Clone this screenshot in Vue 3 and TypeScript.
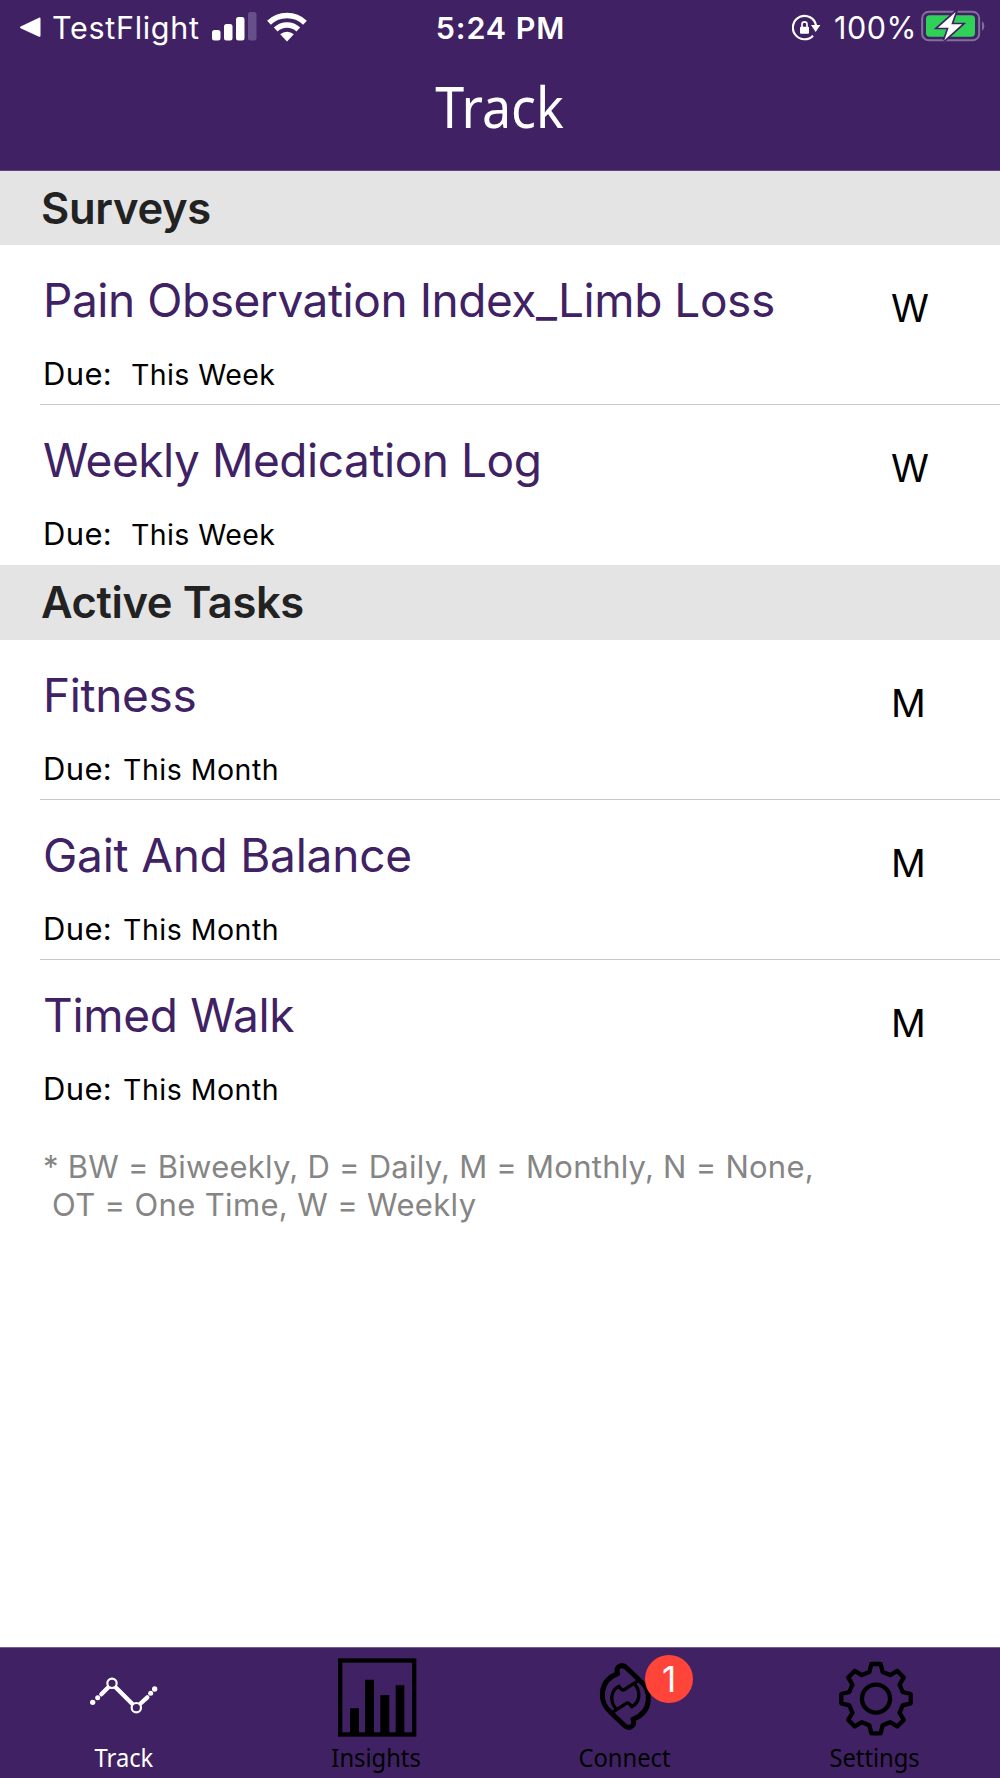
<script setup lang="ts">
interface Task {
  title: string
  due: string
  code: string
  wide?: boolean
  spacing: number
}
interface Section {
  name: string
  spacing: number
  tasks: Task[]
}

const sections: Section[] = [
  {
    name: 'Surveys',
    spacing: -0.3,
    tasks: [
      { title: 'Pain Observation Index_Limb Loss', due: 'This Week', code: 'W', wide: true, spacing: -0.45 },
      { title: 'Weekly Medication Log', due: 'This Week', code: 'W', wide: true, spacing: -0.45 },
    ],
  },
  {
    name: 'Active Tasks',
    spacing: -0.4,
    tasks: [
      { title: 'Fitness', due: 'This Month', code: 'M', spacing: -0.35 },
      { title: 'Gait And Balance', due: 'This Month', code: 'M', spacing: -0.23 },
      { title: 'Timed Walk', due: 'This Month', code: 'M', spacing: -0.3 },
    ],
  },
]

// One arrow of the sync icon; the second is the same shape turned half way round
const arrowOuter = 'M154 218C116 190 114 124 173 101Q167 84 180 78Q190 74 200 84L238 120'
const arrowInner = 'M236 121 193 149Q186 154 177 139C151 152 150 184 166 204'

// One tooth of the gear, repeated every 45 degrees around its centre
const tooth: [number, number][] = [[-20, -80], [-14, -104], [14, -104], [20, -80]]
const gearPoints = Array.from({ length: 8 }, (_, i) => {
  const a = (i * Math.PI) / 4
  return tooth
    .map(([x, y]) => {
      const px = 228 + x * Math.cos(a) - y * Math.sin(a)
      const py = 176 + x * Math.sin(a) + y * Math.cos(a)
      return `${px.toFixed(1)},${py.toFixed(1)}`
    })
    .join(' ')
}).join(' ')
</script>

<template>
  <div class="screen">
    <header class="top">
      <div class="status">
        <div class="left">
          <svg class="back" viewBox="0 0 21 21"><path d="M0.6 9.4 19 .7Q20.5.2 20.5 1.7V18.8Q20.5 20.3 19 19.7L.6 11.3Q-.6 10.3.6 9.4Z" fill="#fff" /></svg>
          <span class="carrier">TestFlight</span>
          <svg class="signal" viewBox="0 0 45 30">
            <rect x="0" y="18" width="8.5" height="10.5" rx="2.5" fill="#fff" />
            <rect x="12" y="12" width="8.5" height="16.5" rx="2.5" fill="#fff" />
            <rect x="24" y="5" width="8.5" height="23.5" rx="2.5" fill="#fff" />
            <rect x="36" y="0" width="8.5" height="28.5" rx="2.5" fill="#67508a" />
          </svg>
          <svg class="wifi" viewBox="0 0 40 30">
            <g fill="none" stroke="#fff" stroke-width="5.4">
              <path d="M2 10.8A26 26 0 0 1 38 10.8" />
              <path d="M8.7 17.5A16.5 16.5 0 0 1 31.3 17.5" />
            </g>
            <path d="M20 29.4 13.2 22.3A10 10 0 0 1 26.8 22.3Z" fill="#fff" />
          </svg>
        </div>
        <div class="time">5:24 PM</div>
        <div class="right">
          <svg class="lock" viewBox="0 0 84 84">
            <path d="M63 65A35 35 0 1 1 72 34" fill="none" stroke="#fff" stroke-width="6.5" />
            <path d="M57 33H85L71 54Z" fill="#fff" />
            <rect x="24" y="38" width="27" height="21" rx="3" fill="#fff" />
            <path d="M30 40V31a7.500 7.500 0 0 1 15 0V40" fill="none" stroke="#fff" stroke-width="5" />
          </svg>
          <span class="percent">100%</span>
          <svg class="battery" viewBox="0 0 192 96">
            <rect x="3.500" y="5" width="171" height="86" rx="20" fill="none" stroke="#83709d" stroke-width="6" />
            <path d="M183 34Q190 38 190 48T183 62Z" fill="#83709d" />
            <rect x="15" y="16" width="147" height="64" rx="11" fill="#30d158" />
            <path d="M104 6 51 53H83L70 91 123 43H91Z" fill="#fff" stroke="#402264" stroke-width="10" paint-order="stroke" />
          </svg>
        </div>
      </div>
      <h1 class="heading"><span>Track</span></h1>
    </header>

    <main class="content">
      <section v-for="s in sections" :key="s.name">
        <h2 class="section-head" :class="{ later: s.name !== 'Surveys' }" :style="{ letterSpacing: s.spacing + 'px' }">{{ s.name }}</h2>
        <article v-for="t in s.tasks" :key="t.title" class="row">
          <div class="info">
            <div class="title" :style="{ letterSpacing: t.spacing + 'px' }">{{ t.title }}</div>
            <div class="due"><span class="due-label">Due:</span><span class="due-value" :class="{ wide: t.wide }">{{ t.due }}</span></div>
          </div>
          <div class="code">{{ t.code }}</div>
        </article>
      </section>
      <p class="legend">* BW = Biweekly, D = Daily, M = Monthly, N = None,<br /><span class="second">OT = One Time, W = Weekly</span></p>
    </main>

    <nav class="tabs">
      <div class="tab active">
        <svg class="icon" viewBox="69 45 252 252">
          <g fill="none" stroke="#fff">
            <path d="M124 163 145 142M166 141 218 193M240 192 262 172" stroke-width="13" stroke-linecap="round" />
            <circle cx="156" cy="130" r="14" stroke-width="6.500" fill="#402264" />
            <circle cx="229" cy="203" r="14" stroke-width="6.500" fill="#402264" />
          </g>
          <g fill="#fff">
            <circle cx="98" cy="187" r="8" /><circle cx="113" cy="173" r="7.500" />
            <circle cx="272" cy="160" r="7.500" /><circle cx="284" cy="147" r="8" />
          </g>
        </svg>
        <span class="label l-track">Track</span>
      </div>
      <div class="tab">
        <svg class="icon" viewBox="69 45 252 252">
          <rect x="90.500" y="61.500" width="222" height="222" fill="none" stroke="#000" stroke-width="13" />
          <path d="M120 205H147V285H120ZM165 119H192V285H165ZM211 165H238V285H211ZM257 136H283V285H257Z" />
        </svg>
        <span class="label l-insights">Insights</span>
      </div>
      <div class="tab">
        <svg class="icon" viewBox="69 45 252 252">
          <g fill="none" stroke="#000" stroke-linejoin="round" stroke-linecap="round">
            <path :d="arrowOuter" stroke-width="15" />
            <path :d="arrowInner" stroke-width="10" />
            <g transform="rotate(180 196 169.500)">
              <path :d="arrowOuter" stroke-width="15" />
              <path :d="arrowInner" stroke-width="10" />
            </g>
          </g>
        </svg>
        <span class="badge">1</span>
        <span class="label l-connect">Connect</span>
      </div>
      <div class="tab">
        <svg class="icon" viewBox="99 45 252 252">
          <g fill="none" stroke="#000" stroke-width="13" stroke-linejoin="round">
            <polygon :points="gearPoints" />
            <circle cx="228" cy="176" r="42" />
          </g>
        </svg>
        <span class="label">Settings</span>
      </div>
    </nav>
  </div>
</template>

<style>
body { margin: 0; background: #fff; }
</style>

<style scoped>
.screen {
  width: 1000px;
  height: 1778px;
  display: flex;
  flex-direction: column;
  overflow: hidden;
  background: #fff;
  font-family: Inter, "Liberation Sans", sans-serif;
  color: #000;
  white-space: nowrap;
}
.top { height: 171px; box-sizing: border-box; background: #402264; color: #fff; border-bottom: 1px solid #5f467c; flex: none; }
.status { display: grid; grid-template-columns: 400px 200px 400px; height: 56px; font-size: 30.500px; line-height: 55px; }
.left, .right { display: flex; }
.back { width: 21px; height: 21px; margin: 17px 0 0 20px; }
.carrier { width: 171px; padding-left: 11px; box-sizing: border-box; letter-spacing: 0.7px; }
.signal { width: 45px; height: 30px; margin-top: 12px; }
.wifi { width: 40px; height: 30px; margin: 12px 0 0 10px; }
.time { text-align: center; font-weight: 600; letter-spacing: 0.9px; padding-left: 1px; }
.lock { width: 28px; height: 28px; margin: 14px 0 0 192px; }
.percent { width: 87px; padding-left: 14px; box-sizing: border-box; letter-spacing: 0.5px; }
.battery { width: 64px; height: 32px; margin: 10px 0 0 14px; }
.heading {
  margin: 0;
  font: 400 57px/80px "Noto Sans", sans-serif;
  text-align: center;
  padding-top: 10px;
}
.heading span { display: inline-block; transform: scaleX(0.913); }
.content { flex: 1; }
.section-head {
  margin: 0;
  height: 74px;
  line-height: 74px;
  padding-left: 41px;
  background: #e4e4e4;
  color: #222;
  font-size: 43.500px;
  font-weight: 600;
}
.section-head.later { height: 75px; }
.row { display: flex; height: 160px; }
.info { flex: 1; margin-left: 40px; padding: 27px 0 0 3px; border-bottom: 1px solid #c8c8c8; box-sizing: border-box; }
.row:last-child .info { border-bottom: 0; }
.title { font-size: 46px; line-height: 56px; color: #402264; }
.due { display: flex; align-items: baseline; margin-top: 28px; line-height: 36px; }
.due-label { width: 80px; font-size: 31px; letter-spacing: 0.35px; }
.due-value { font-size: 28.500px; letter-spacing: 0.5px; }
.due-value.wide { padding-left: 8px; letter-spacing: 0.4px; }
.code { width: 109px; padding-top: 35px; font-size: 38.500px; line-height: 56px; border-bottom: 1px solid #c8c8c8; box-sizing: border-box; }
.row:last-child .code { border-bottom: 0; }
.legend { margin: 28px 0 0 43px; font-size: 31px; line-height: 37.500px; color: #858585; letter-spacing: 0.25px; }
.second { padding-left: 9px; letter-spacing: 0.35px; }
.tabs {
  height: 131px;
  flex: none;
  display: grid;
  grid-template-columns: repeat(4, 1fr);
  background: #402264;
  border-top: 1px solid #755d8c;
  box-sizing: border-box;
}
.tab { position: relative; display: flex; flex-direction: column; align-items: center; padding-top: 7px; color: #000; }
.tab.active { color: #fff; }
.icon { width: 84px; height: 84px; flex: none; }
.label { margin-top: 2px; font: 25px/32px "Noto Sans", sans-serif; transform: scaleX(0.95); }
.l-track { margin-right: 2px; }
.l-insights { margin-left: 2px; }
.l-connect { margin-right: 1px; }
.badge {
  position: absolute;
  left: 145px;
  top: 7px;
  width: 48px;
  height: 48px;
  border-radius: 50%;
  background: #ff453a;
  color: #fff;
  font-size: 35px;
  line-height: 48px;
  text-align: center;
}
</style>
